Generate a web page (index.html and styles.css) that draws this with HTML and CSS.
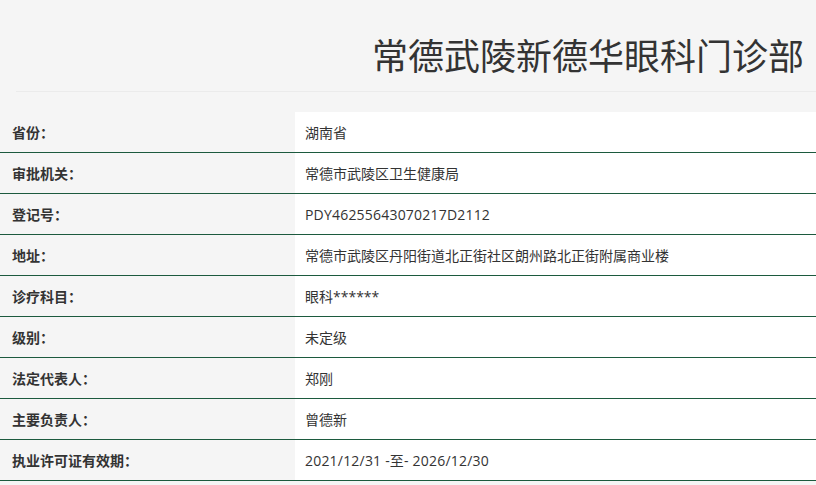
FILE: index.html
```html
<!DOCTYPE html>
<html lang="zh-CN">
<head>
<meta charset="utf-8">
<title>常德武陵新德华眼科门诊部</title>
<link rel="stylesheet" href="styles.css">
</head>
<body>
<header class="page-header">
  <h1 class="title">常德武陵新德华眼科门诊部</h1>
</header>
<div class="divider"></div>
<div class="info">
  <div class="row"><div class="label">省份：</div><div class="value">湖南省</div></div>
  <div class="row"><div class="label">审批机关：</div><div class="value">常德市武陵区卫生健康局</div></div>
  <div class="row"><div class="label">登记号：</div><div class="value"><span class="latin">PDY46255643070217D2112</span></div></div>
  <div class="row"><div class="label">地址：</div><div class="value">常德市武陵区丹阳街道北正街社区朗州路北正街附属商业楼</div></div>
  <div class="row"><div class="label">诊疗科目：</div><div class="value">眼科******</div></div>
  <div class="row"><div class="label">级别：</div><div class="value">未定级</div></div>
  <div class="row"><div class="label">法定代表人：</div><div class="value">郑刚</div></div>
  <div class="row"><div class="label">主要负责人：</div><div class="value">曾德新</div></div>
  <div class="row"><div class="label">执业许可证有效期：</div><div class="value"><span class="latin">2021/12/31 -至- 2026/12/30</span></div></div>
</div>
</body>
</html>
```
FILE: styles.css
```css
html, body {
  margin: 0;
  padding: 0;
  background: #f5f5f5;
  color: #333;
  font-family: "Open Sans", "Noto Sans CJK SC", sans-serif;
}
.page-header {
  padding: 36px 12px 19px 0;
}
.title {
  margin: 0;
  text-align: right;
  font-size: 36px;
  line-height: 36px;
  font-weight: normal;
  color: #333;
  font-family: "Noto Sans CJK SC", sans-serif;
}
.divider {
  margin-left: 16px;
  border-top: 1px solid #ebebeb;
}
.info {
  margin-top: 20px;
}
.row {
  display: flex;
  height: 40px;
  border-bottom: 1px solid #1c5a3e;
  font-size: 14px;
}
.label {
  width: 283px;
  padding-left: 12px;
  display: flex;
  align-items: center;
  font-weight: bold;
  color: #333;
}
.value {
  flex: 1;
  background: #fff;
  padding-left: 10px;
  display: flex;
  align-items: center;
  color: #333;
}
.latin {
  letter-spacing: 0.2px;
}
```
